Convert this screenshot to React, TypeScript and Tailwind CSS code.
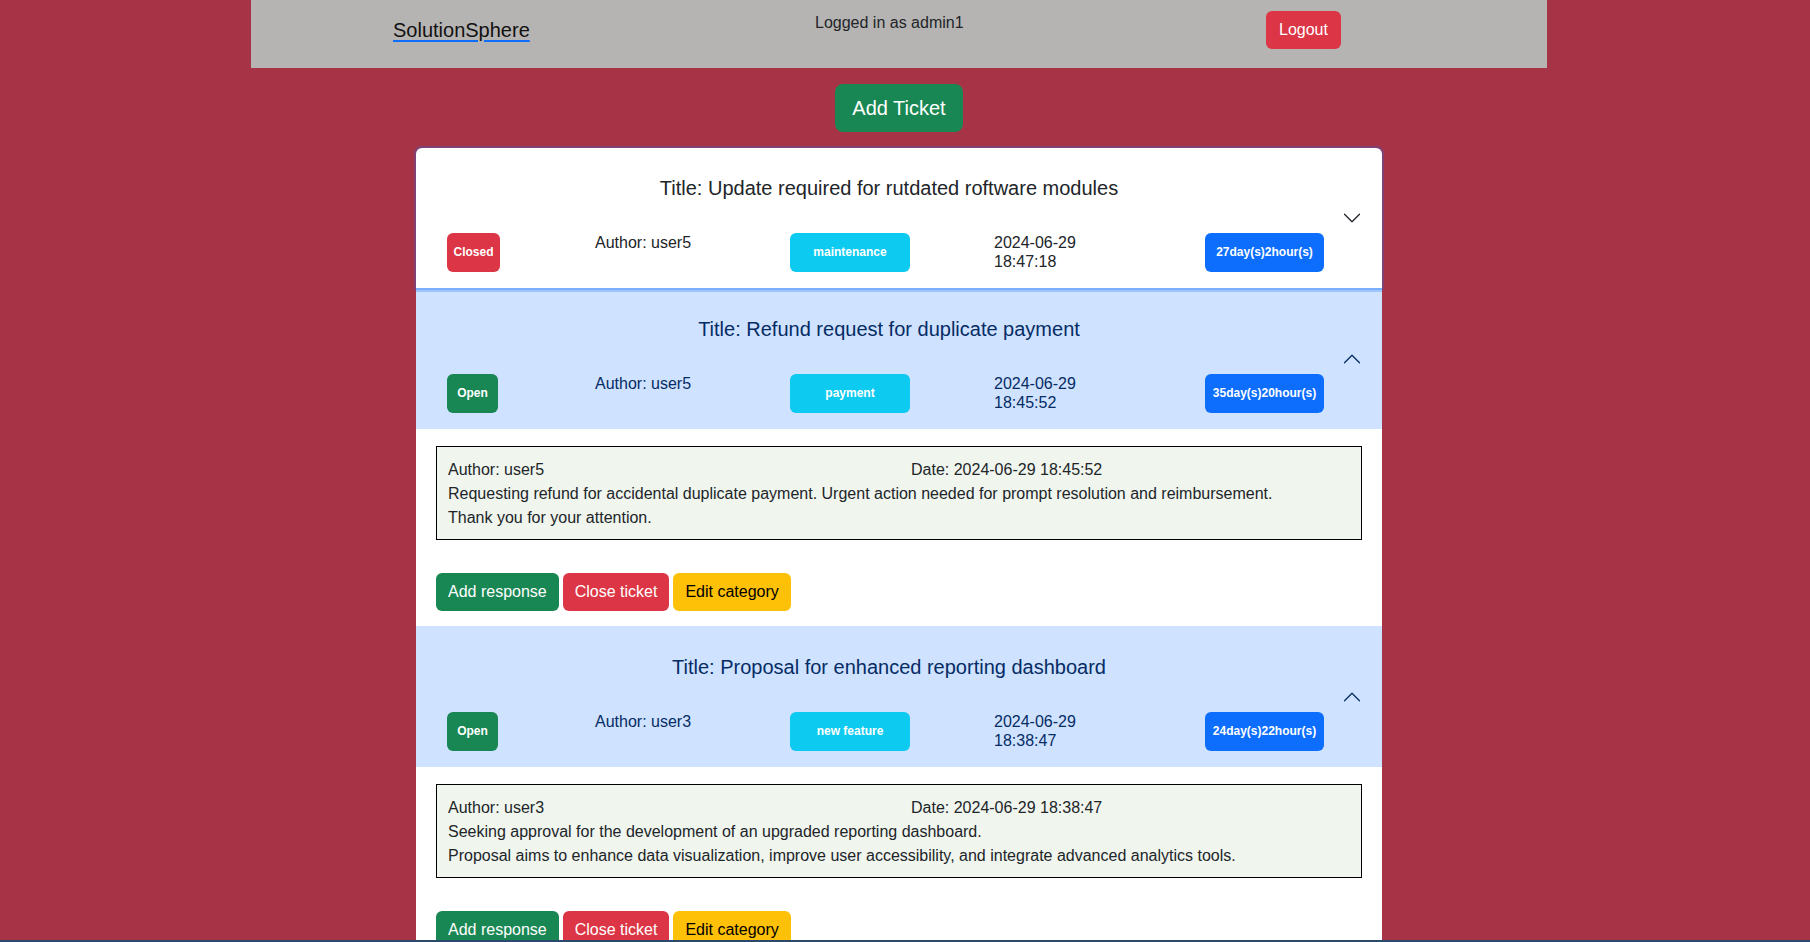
import React from "react";

type Ticket = {
  title: string;
  author: string;
  status: "Open" | "Closed";
  category: string;
  date: string;
  time: string;
  age: string;
  expanded: boolean;
  focused?: boolean;
  lines: string[];
};

const tickets: Ticket[] = [
  {
    title: "Update required for rutdated roftware modules",
    author: "user5",
    status: "Closed",
    category: "maintenance",
    date: "2024-06-29",
    time: "18:47:18",
    age: "27day(s)2hour(s)",
    expanded: false,
    focused: true,
    lines: [],
  },
  {
    title: "Refund request for duplicate payment",
    author: "user5",
    status: "Open",
    category: "payment",
    date: "2024-06-29",
    time: "18:45:52",
    age: "35day(s)20hour(s)",
    expanded: true,
    lines: [
      "Requesting refund for accidental duplicate payment. Urgent action needed for prompt resolution and reimbursement.",
      "Thank you for your attention.",
    ],
  },
  {
    title: "Proposal for enhanced reporting dashboard",
    author: "user3",
    status: "Open",
    category: "new feature",
    date: "2024-06-29",
    time: "18:38:47",
    age: "24day(s)22hour(s)",
    expanded: true,
    lines: [
      "Seeking approval for the development of an upgraded reporting dashboard.",
      "Proposal aims to enhance data visualization, improve user accessibility, and integrate advanced analytics tools.",
    ],
  },
];

const Chevron = ({ up }: { up: boolean }) => (
  <svg
    viewBox="0 0 16 16"
    fill="none"
    stroke={up ? "#052c65" : "#212529"}
    strokeLinecap="round"
    strokeLinejoin="round"
    className={up ? "w-5 h-5 shrink-0 rotate-180" : "w-5 h-5 shrink-0"}
  >
    <path d="M2 5L8 11L14 5" />
  </svg>
);

const TicketItem = ({ t }: { t: Ticket }) => {
  return (
    <div
      className={
        t.focused
          ? "relative z-10 bg-white rounded-t-md shadow-[0_0_0_2px_rgba(13,110,253,0.25),0_4px_0_0_rgba(13,110,253,0.25)]"
          : "relative bg-white"
      }
    >
      <div
        className={
          t.expanded
            ? "flex items-center px-5 h-[141px] bg-[#cfe2ff] text-[#052c65]"
            : "flex items-center px-5 h-[140px] text-[#212529] rounded-t-md"
        }
      >
        <div className="flex-1 flex flex-col">
          <div className="text-center text-[20px] leading-6 mt-[12px]">Title: {t.title}</div>
          <div className="grid grid-cols-[148px_195px_204px_211px_auto] ml-[11px] mt-[33px] items-start text-[16px] leading-[19px] text-[#212529]">
            <div>
              <span
                className={
                  t.status === "Closed"
                    ? "inline-flex items-center justify-center w-[53px] h-[39px] rounded-md bg-[#dc3545] text-white text-[12px] font-bold"
                    : "inline-flex items-center justify-center w-[51px] h-[39px] rounded-md bg-[#198754] text-white text-[12px] font-bold"
                }
              >
                {t.status}
              </span>
            </div>
            <div className={t.expanded ? "text-[#052c65]" : ""}>Author: {t.author}</div>
            <div>
              <span className="inline-flex items-center justify-center w-[120px] h-[39px] rounded-md bg-[#0dcaf0] text-white text-[12px] font-bold">
                {t.category}
              </span>
            </div>
            <div className={t.expanded ? "text-[#052c65]" : ""}>
              <div>{t.date}</div>
              <div>{t.time}</div>
            </div>
            <div>
              <span className="inline-flex items-center justify-center w-[119px] h-[39px] rounded-md bg-[#0d6efd] text-white text-[12px] font-bold">
                {t.age}
              </span>
            </div>
          </div>
        </div>
        <Chevron up={t.expanded} />
      </div>
      {t.expanded && (
        <div className="px-5 pt-[17px] pb-[15px] bg-white">
          <div className="border border-black bg-[#f0f5ee] px-[11px] pt-[11px] pb-[9px] text-[16px] leading-6 text-[#212529]">
            <div className="flex">
              <div className="w-[463px]">Author: {t.author}</div>
              <div>
                Date: {t.date} {t.time}
              </div>
            </div>
            {t.lines.map((l, i) => (
              <div key={i}>{l}</div>
            ))}
          </div>
          <div className="flex gap-1 mt-[33px] text-[16px] leading-6">
            <button className="px-3 py-[7px] rounded-md bg-[#198754] text-white">Add response</button>
            <button className="px-3 py-[7px] rounded-md bg-[#dc3545] text-white">Close ticket</button>
            <button className="px-3 py-[7px] rounded-md bg-[#ffc107] text-black">Edit category</button>
          </div>
        </div>
      )}
    </div>
  );
};

export default function App() {
  return (
    <div className="min-h-screen bg-[#a73347] pr-3 font-['Liberation_Sans',Arial,sans-serif]">
      <header className="w-[1296px] h-[68px] mx-auto bg-[#b6b4b2] grid grid-cols-[422px_451px_auto] pl-[142px]">
        <a href="#" className="mt-[11px] text-[20px] leading-[38px] text-[#111] underline decoration-[#0d6efd] underline-offset-[3px] self-start justify-self-start">
          SolutionSphere
        </a>
        <p className="mt-[11px] text-[16px] leading-6 text-[#212529]">Logged in as admin1</p>
        <div className="mt-[11px]">
          <button className="h-[38px] px-[13px] rounded-md bg-[#dc3545] text-white text-[16px]">Logout</button>
        </div>
      </header>
      <div className="flex justify-center mt-4">
        <button className="w-[128px] h-[48px] rounded-lg bg-[#198754] text-white text-[20px]">Add Ticket</button>
      </div>
      <div className="w-[966px] mx-auto mt-4 rounded-t-md">
        {tickets.map((t, i) => (
          <TicketItem key={i} t={t} />
        ))}
      </div>
      <div className="fixed left-0 bottom-0 w-full h-[2px] bg-[#2b4a6b]" />
    </div>
  );
}
